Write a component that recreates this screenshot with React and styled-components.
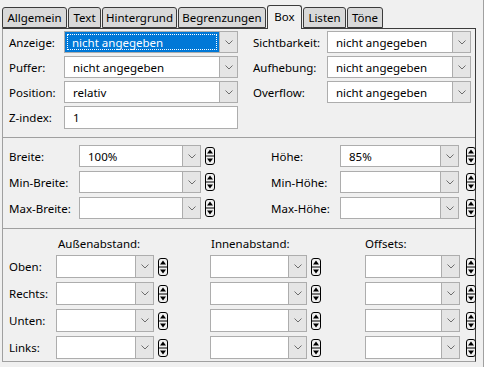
import styled, { createGlobalStyle } from "styled-components"

const GlobalStyle = createGlobalStyle`
  html, body {
    margin: 0;
    padding: 0;
    background: #f0f0f0;
  }
  body {
    font-family: "Segoe UI", "Noto Sans", "DejaVu Sans", sans-serif;
    font-size: 11.5px;
    color: #000;
  }
`

const Screen = styled.div`
  display: flex;
  width: 488px;
  height: 367px;
  overflow: hidden;
`

const Dialog = styled.div`
  width: 484px;
  padding: 5px 0 0 2px;
  box-sizing: border-box;
`

const BehindEdge = styled.div`
  width: 4px;
  border-left: 1px solid #a0a0a0;
  background: #ffffff;
`

const TabBar = styled.div`
  display: flex;
  align-items: flex-end;
  height: 23px;
  position: relative;
  z-index: 2;
`

const Tab = styled.div`
  width: ${p => p.w}px;
  height: ${p => (p.active ? 24 : 21)}px;
  margin-right: 1px;
  margin-bottom: ${p => (p.active ? -1 : 0)}px;
  box-sizing: border-box;
  border: 1px solid #3c3c3c;
  border-bottom: ${p => (p.active ? "none" : "1px solid #3c3c3c")};
  border-radius: 3px 3px 0 0;
  background: ${p => (p.active ? "#f0f0f0" : "#d9d9d9")};
  display: flex;
  justify-content: center;
  align-items: ${p => (p.active ? "flex-start" : "center")};
  padding-top: ${p => (p.active ? 3 : 0)}px;
  white-space: nowrap;
`

const Panel = styled.div`
  width: 474px;
  height: 334px;
  box-sizing: border-box;
  border: 1px solid #3c3c3c;
  border-left-color: #a0a0a0;
  border-bottom-color: #a0a0a0;
  background: #f0f0f0;
  display: flex;
  flex-direction: column;
`

const Section = styled.div`
  padding: ${p => p.pad};
  border-bottom: ${p => (p.last ? "none" : "1px solid #a0a0a0")};
  display: flex;
  flex-direction: column;
  gap: ${p => p.gap}px;
`

const Row = styled.div`
  display: flex;
  align-items: center;
  height: ${p => p.h || 22}px;
`

const Label = styled.div`
  width: ${p => p.w}px;
  box-sizing: border-box;
  white-space: nowrap;
  flex-shrink: 0;
`

const Box = styled.div`
  width: ${p => p.w}px;
  height: ${p => p.h || 22}px;
  box-sizing: border-box;
  border: 1px solid #adadad;
  background: ${p => (p.focused ? "#0078d7" : "#ffffff")};
  display: flex;
  flex-shrink: 0;
`

const Field = styled.div`
  flex: 1;
  display: flex;
  align-items: center;
  padding-left: ${p => (p.focused ? 7 : 8)}px;
  color: ${p => (p.focused ? "#ffffff" : "#000")};
  background: ${p => (p.focused ? "#0078d7" : "#ffffff")};
  outline: ${p => (p.focused ? "1px dotted #ffffff" : "none")};
  outline-offset: -3px;
  white-space: nowrap;
  overflow: hidden;
`

const DropButton = styled.div`
  width: 17px;
  flex-shrink: 0;
  border-left: 1px solid #adadad;
  background: #e5e5e5;
  display: flex;
  align-items: center;
  justify-content: center;
`

const Gap = styled.div`
  width: ${p => p.w}px;
  flex-shrink: 0;
`

const ColHead = styled.div`
  width: ${p => p.w}px;
  flex-shrink: 0;
  white-space: nowrap;
`

function Chevron() {
  return (
    <svg width="8" height="5" viewBox="0 0 8 5">
      <path d="M0.5 0.5 L4 4 L7.5 0.5" fill="none" stroke="#6d6d6d" strokeWidth="1" />
    </svg>
  )
}

function Spin() {
  return (
    <svg width="10" height="18" viewBox="0 0 10 18" style={{ flexShrink: 0 }}>
      <rect x="0.5" y="0.5" width="9" height="17" rx="2.5" fill="#f0f0f0" stroke="#000" />
      <path d="M1 9 H9" stroke="#000" />
      <path d="M5 2.5 L8 6.5 H2 Z" fill="#000" />
      <path d="M5 15.5 L8 11.5 H2 Z" fill="#000" />
    </svg>
  )
}

function Combo({ w, value, focused, h }) {
  return (
    <Box w={w} h={h} focused={focused}>
      <Field focused={focused}>{value}</Field>
      <DropButton>
        <Chevron />
      </DropButton>
    </Box>
  )
}

function TextBox({ w, value }) {
  return (
    <Box w={w} h={23}>
      <Field>{value}</Field>
    </Box>
  )
}

const tabs = [
  ["Allgemein", 65],
  ["Text", 33],
  ["Hintergrund", 75],
  ["Begrenzungen", 88],
  ["Box", 35],
  ["Listen", 43],
  ["Töne", 36],
]

const sizes = [
  ["Breite:", "100%", "Höhe:", "85%"],
  ["Min-Breite:", "", "Min-Höhe:", ""],
  ["Max-Breite:", "", "Max-Höhe:", ""],
]

const sides = ["Oben:", "Rechts:", "Unten:", "Links:"]

export default function App() {
  return (
    <Screen>
      <GlobalStyle />
      <Dialog>
        <TabBar>
          {tabs.map(([name, w]) => (
            <Tab key={name} w={w} active={name === "Box"}>{name}</Tab>
          ))}
        </TabBar>
        <Panel>
          <Section pad="2px 0 8px 6px" gap={3}>
            <Row>
              <Label w={55}>Anzeige:</Label>
              <Combo w={174} value="nicht angegeben" focused />
              <Gap w={15} />
              <Label w={74}>Sichtbarkeit:</Label>
              <Combo w={144} value="nicht angegeben" />
            </Row>
            <Row>
              <Label w={55}>Puffer:</Label>
              <Combo w={174} value="nicht angegeben" />
              <Gap w={15} />
              <Label w={74}>Aufhebung:</Label>
              <Combo w={144} value="nicht angegeben" />
            </Row>
            <Row>
              <Label w={55}>Position:</Label>
              <Combo w={174} value="relativ" />
              <Gap w={15} />
              <Label w={74}>Overflow:</Label>
              <Combo w={144} value="nicht angegeben" />
            </Row>
            <Row h={23}>
              <Label w={55}>Z-index:</Label>
              <TextBox w={174} value="1" />
            </Row>
          </Section>
          <Section pad="7px 0 9px 6px" gap={4}>
            {sizes.map(([l1, v1, l2, v2]) => (
              <Row key={l1}>
                <Label w={70}>{l1}</Label>
                <Combo w={122} value={v1} />
                <Gap w={4} />
                <Spin />
                <Gap w={56} />
                <Label w={69}>{l2}</Label>
                <Combo w={119} value={v2} />
                <Gap w={7} />
                <Spin />
              </Row>
            ))}
          </Section>
          <Section pad="6px 0 0 6px" gap={4} last>
            <Row h={16}>
              <Gap w={49} />
              <ColHead w={153}>Außenabstand:</ColHead>
              <ColHead w={154}>Innenabstand:</ColHead>
              <ColHead w={80}>Offsets:</ColHead>
            </Row>
            {sides.map(l => (
              <Row key={l} h={23}>
                <Label w={47}>{l}</Label>
                <Combo w={98} h={23} value="" />
                <Gap w={4} />
                <Spin />
                <Gap w={42} />
                <Combo w={97} h={23} value="" />
                <Gap w={4} />
                <Spin />
                <Gap w={44} />
                <Combo w={95} h={23} value="" />
                <Gap w={6} />
                <Spin />
              </Row>
            ))}
          </Section>
        </Panel>
      </Dialog>
      <BehindEdge />
    </Screen>
  )
}
